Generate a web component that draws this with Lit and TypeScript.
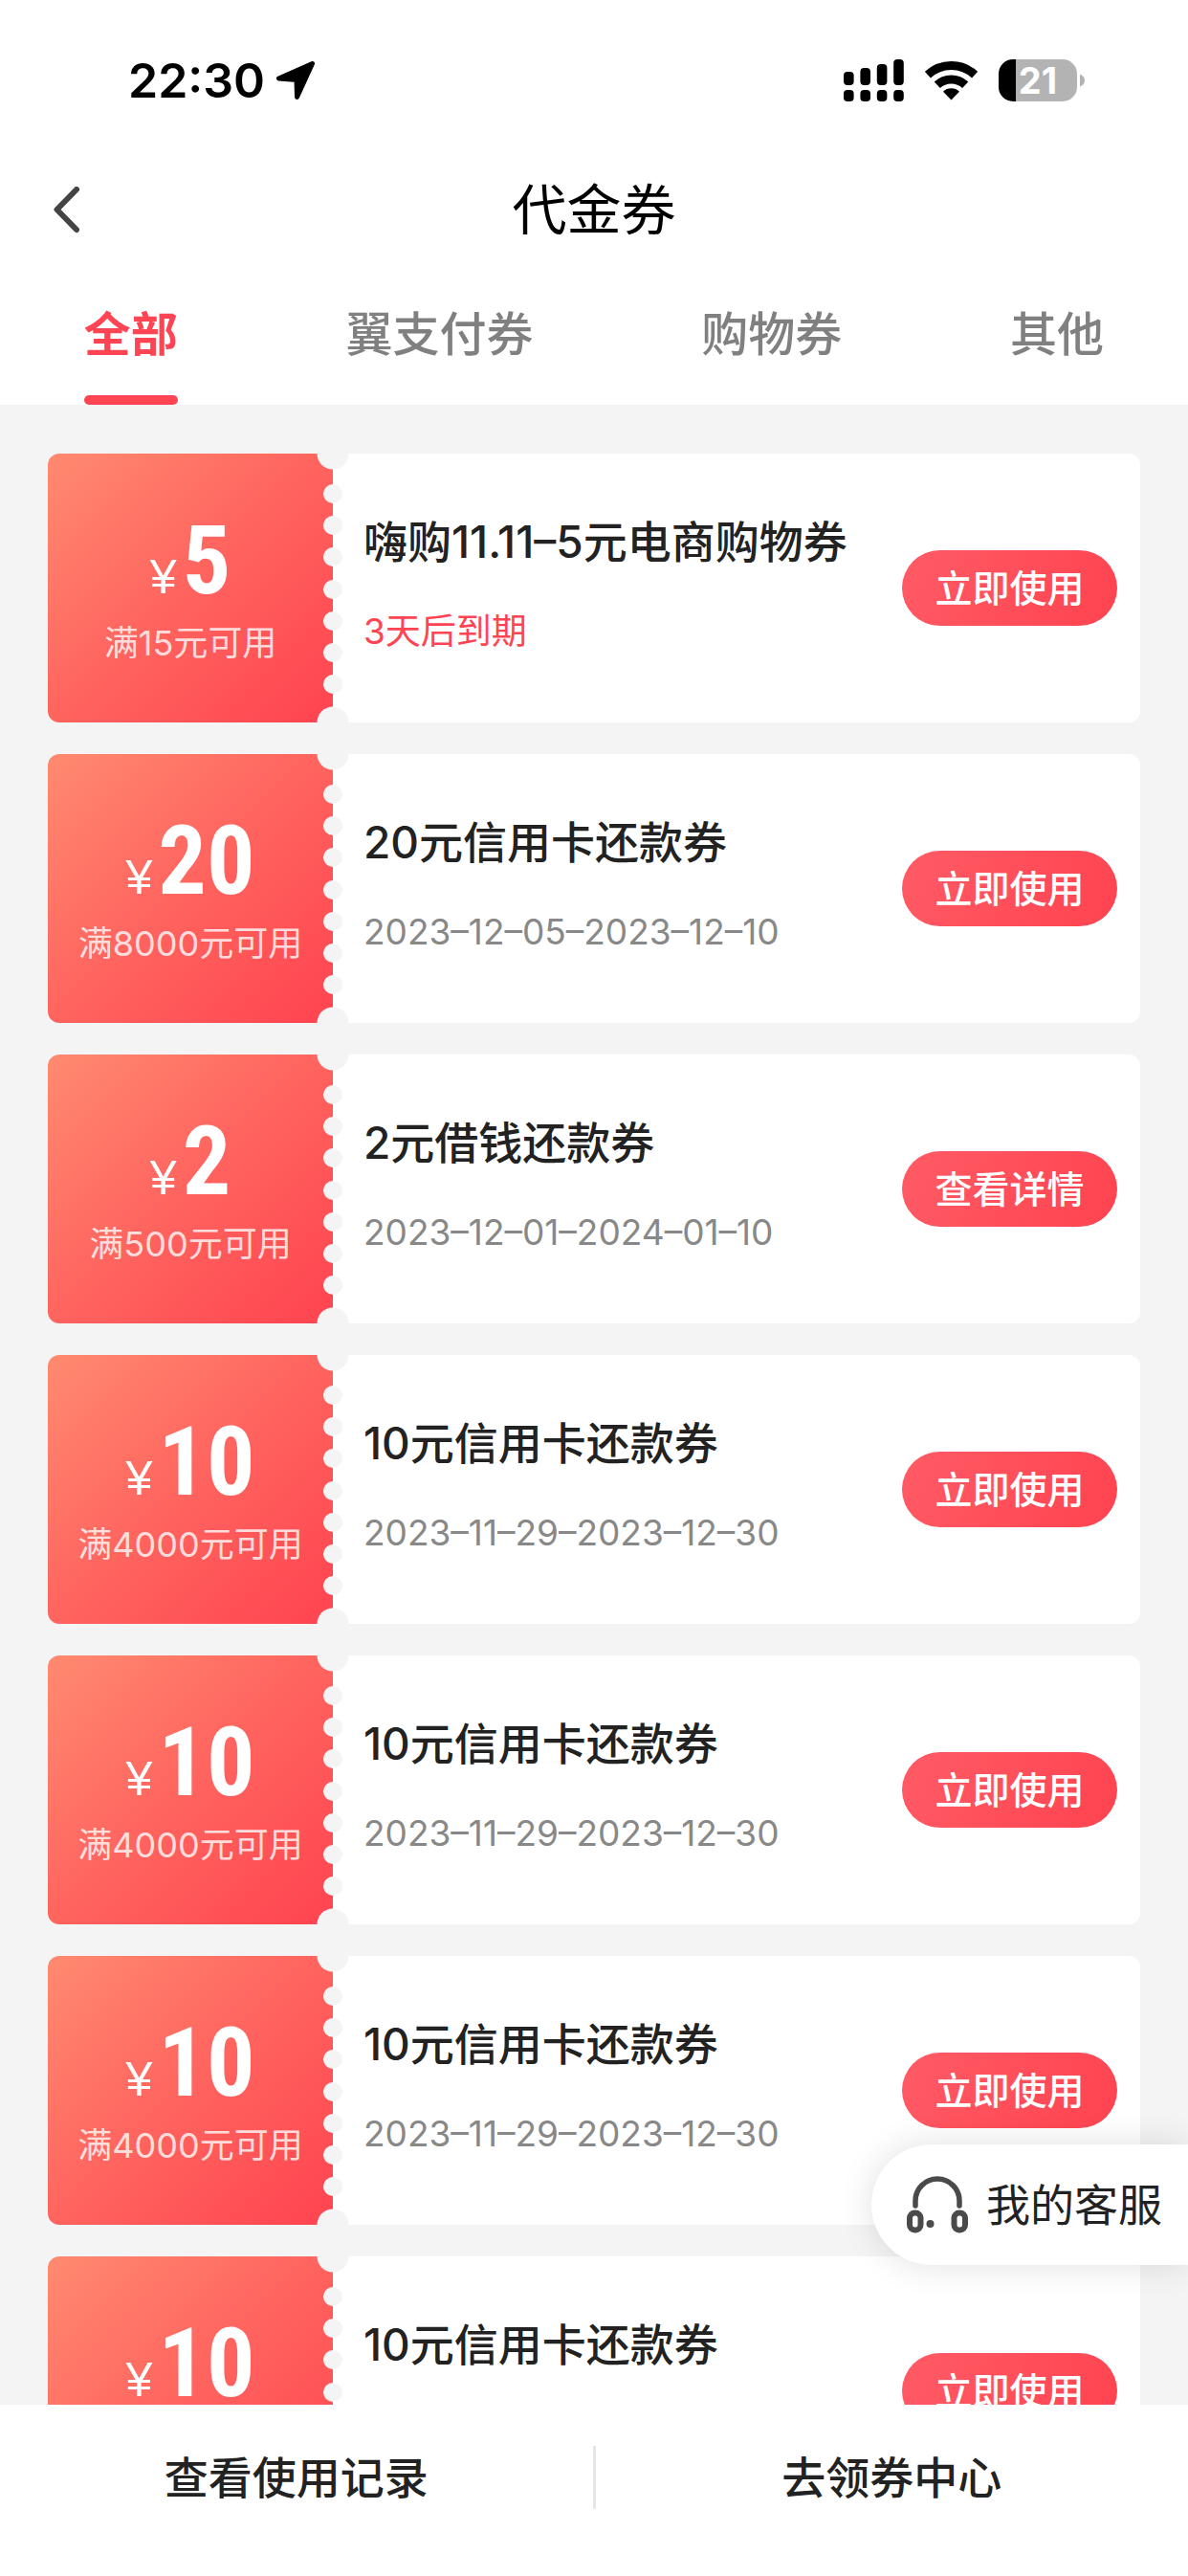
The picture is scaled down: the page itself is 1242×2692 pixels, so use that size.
import { LitElement, html, css, svg } from "lit";
import { customElement, property, state } from "lit/decorators.js";

interface Coupon {
  amount: string;
  condition: string;
  title: string;
  period: string;
  urgent?: boolean;
  action: string;
}

const TABS = ["全部", "翼支付券", "购物券", "其他"];

const repayment: Coupon = {
  amount: "10",
  condition: "满4000元可用",
  title: "10元信用卡还款券",
  period: "2023–11–29–2023–12–30",
  action: "立即使用",
};

const COUPONS: Coupon[] = [
  {
    amount: "5",
    condition: "满15元可用",
    title: "嗨购11.11–5元电商购物券",
    period: "3天后到期",
    urgent: true,
    action: "立即使用",
  },
  {
    amount: "20",
    condition: "满8000元可用",
    title: "20元信用卡还款券",
    period: "2023–12–05–2023–12–10",
    action: "立即使用",
  },
  {
    amount: "2",
    condition: "满500元可用",
    title: "2元借钱还款券",
    period: "2023–12–01–2024–01–10",
    action: "查看详情",
  },
  repayment,
  repayment,
  repayment,
  repayment,
];

const HOLES = [42, 75, 108, 142, 175, 208, 241];

@customElement("status-bar")
export class StatusBar extends LitElement {
  static styles = css`
    :host {
      display: flex;
      align-items: center;
      justify-content: space-between;
      height: 168px;
      padding: 0 108px 0 134px;
      box-sizing: border-box;
      color: #000;
    }
    .side {
      display: flex;
      align-items: center;
    }
    .left {
      gap: 12px;
    }
    .right {
      gap: 22px;
    }
    .time {
      font-size: 50px;
      line-height: 64px;
      font-weight: 600;
    }
    svg {
      display: block;
    }
    .battery {
      display: flex;
      align-items: center;
      gap: 3px;
    }
    .cell {
      display: flex;
      align-items: center;
      justify-content: center;
      width: 82px;
      height: 44px;
      border-radius: 15px;
      background: linear-gradient(90deg, #000 18px, #b3b3b3 18px);
      color: #fff;
      font-size: 38px;
      line-height: 44px;
      font-weight: 700;
    }
  `;

  render() {
    return html`
      <div class="side left">
        <span class="time">22:30</span>
        <svg width="40" height="40" viewBox="0 0 40 40" aria-hidden="true">
          <path
            d="M37.5 2.5 L2.5 18 L21 19.5 L21.5 37.5 Z"
            stroke="#000"
            stroke-width="5"
            stroke-linejoin="round"
          />
        </svg>
      </div>
      <div class="side right">
        <svg width="63" height="44" viewBox="0 0 63 44" aria-hidden="true">
          ${[13, 9, 5, 0].map(
            (top, i) => svg`
              <rect x=${i * 17.4} y=${top} width="10.6" height=${27 - top} rx="4" />
              <rect x=${i * 17.4} y="32" width="10.6" height="12" rx="4" />`
          )}
        </svg>
        <svg width="55" height="44" viewBox="0 0 55 44" aria-hidden="true">
          <g fill="none" stroke="#000" stroke-width="9">
            <path d="M2.9 16.2 A36 36 0 0 1 52.1 16.2" />
            <path d="M12.8 26.8 A21.5 21.5 0 0 1 42.2 26.8" />
          </g>
          <path d="M27.5 42.5 L19 33.7 A12.2 12.2 0 0 1 36 33.7 Z" />
        </svg>
        <div class="battery">
          <span class="cell">21</span>
          <svg width="5" height="14" viewBox="0 0 5 14" aria-hidden="true">
            <path d="M0 0.5 Q5 2.5 5 7 T0 13.5 Z" fill="#b3b3b3" />
          </svg>
        </div>
      </div>
    `;
  }
}

@customElement("coupon-card")
export class CouponCard extends LitElement {
  @property({ attribute: false }) coupon!: Coupon;

  static styles = css`
    :host {
      display: block;
    }
    .card {
      position: relative;
      display: flex;
      height: 281px;
      border-radius: 12px;
      overflow: hidden;
      background: #fff;
    }
    .value {
      flex: none;
      display: flex;
      flex-direction: column;
      align-items: center;
      width: 298px;
      padding-top: 60px;
      box-sizing: border-box;
      background: linear-gradient(135deg, #ff8a70 0%, #ff655f 48%, #ff4350 100%);
      color: #fff;
    }
    .amount {
      display: flex;
      align-items: baseline;
      gap: 6px;
      height: 104px;
      line-height: 104px;
      white-space: nowrap;
    }
    .yen {
      font-family: "Liberation Sans", sans-serif;
      font-size: 50px;
    }
    .number {
      font-family: "Roboto Condensed", "Noto Sans CJK SC", sans-serif;
      font-size: 100px;
      font-weight: 700;
    }
    .condition {
      font-size: 36px;
      line-height: 68px;
      font-weight: 400;
      color: rgba(255, 255, 255, 0.8);
      white-space: nowrap;
    }
    .perforation {
      position: absolute;
      top: 0;
      left: 281px;
      fill: #f4f4f4;
    }
    .info {
      flex: 1;
      min-width: 0;
      padding: 60px 0 0 32px;
    }
    .title {
      margin: 0;
      font-size: 46px;
      line-height: 64px;
      font-weight: 500;
      color: #222;
      white-space: nowrap;
    }
    .period {
      margin: 36px 0 0;
      font-size: 37px;
      line-height: 52px;
      font-weight: 400;
      color: #888;
      white-space: nowrap;
    }
    .urgent {
      color: #ff4453;
    }
    .action {
      flex: none;
      align-self: center;
      width: 225px;
      height: 79px;
      margin-right: 24px;
      padding: 0;
      border: 0;
      border-radius: 40px;
      background: linear-gradient(115deg, #ff5b66, #ff4350);
      color: #fff;
      font: inherit;
      font-size: 39px;
      line-height: 79px;
      font-weight: 500;
    }
  `;

  render() {
    const c = this.coupon;
    return html`
      <article class="card">
        <div class="value">
          <div class="amount">
            <span class="yen">¥</span><span class="number">${c.amount}</span>
          </div>
          <div class="condition">${c.condition}</div>
        </div>
        <svg class="perforation" width="34" height="281" viewBox="0 0 34 281" aria-hidden="true">
          <circle cx="17" cy="0" r="16.5" />
          ${HOLES.map((y) => svg`<circle cx="17" cy=${y} r="10" />`)}
          <circle cx="17" cy="281" r="16.5" />
        </svg>
        <div class="info">
          <h2 class="title">${c.title}</h2>
          <p class="period ${c.urgent ? "urgent" : ""}">${c.period}</p>
        </div>
        <button class="action" type="button">${c.action}</button>
      </article>
    `;
  }
}

@customElement("app-root")
export class AppRoot extends LitElement {
  @state() private active = 0;

  static styles = css`
    :host {
      position: relative;
      display: flex;
      flex-direction: column;
      height: 100vh;
      overflow: hidden;
      background: #f4f4f4;
      font-family: "Inter", "Noto Sans CJK SC", sans-serif;
    }
    .head {
      flex: none;
      background: #fff;
    }
    .titlebar {
      display: grid;
      grid-template-columns: 1fr auto 1fr;
      align-items: center;
      height: 104px;
      padding: 0 55px;
    }
    .back {
      justify-self: start;
      padding: 0;
      border: 0;
      background: none;
    }
    .back svg {
      display: block;
    }
    .heading {
      margin: 0;
      font-size: 57px;
      line-height: 80px;
      font-weight: 400;
      color: #000;
    }
    .tabs {
      display: flex;
      justify-content: space-around;
      padding-top: 15px;
    }
    .tab {
      display: flex;
      flex-direction: column;
      padding: 0;
      border: 0;
      background: none;
      font: inherit;
      font-size: 49px;
      line-height: 126px;
      font-weight: 500;
      color: #808080;
    }
    .tab::after {
      content: "";
      align-self: stretch;
      height: 10px;
      border-radius: 5px;
    }
    .selected {
      color: #ff4453;
      font-weight: 700;
    }
    .selected::after {
      background: #ff4453;
    }
    .list {
      flex: 1;
      min-height: 0;
      overflow: hidden;
      display: flex;
      flex-direction: column;
      gap: 33px;
      padding: 51px 50px 0;
    }
    .coupon {
      flex: none;
    }
    .service {
      position: absolute;
      right: 0;
      bottom: 325px;
      display: flex;
      align-items: center;
      gap: 18px;
      height: 126px;
      padding: 0 27px 0 36px;
      border: 0;
      border-radius: 63px 0 0 63px;
      background: #fff;
      box-shadow: 0 0 36px rgba(0, 0, 0, 0.12);
      color: #222;
      font: inherit;
      font-size: 46px;
      line-height: 64px;
    }
    .footer {
      flex: none;
      display: flex;
      align-items: center;
      height: 152px;
      padding-bottom: 27px;
      background: #fff;
    }
    .link {
      flex: 1;
      text-align: center;
      text-decoration: none;
      font-size: 46px;
      line-height: 64px;
      font-weight: 500;
      color: #222;
    }
    .divider {
      width: 3px;
      height: 66px;
      background: #e6e6e6;
    }
  `;

  render() {
    return html`
      <header class="head">
        <status-bar></status-bar>
        <div class="titlebar">
          <button class="back" type="button" aria-label="返回">
            <svg width="30" height="50" viewBox="0 0 30 50" aria-hidden="true">
              <path
                d="M25 3 L4.5 24 L25 45"
                fill="none"
                stroke="#444"
                stroke-width="6"
                stroke-linecap="round"
                stroke-linejoin="round"
              />
            </svg>
          </button>
          <h1 class="heading">代金券</h1>
        </div>
        <nav class="tabs">
          ${TABS.map(
            (label, i) => html`<button
              type="button"
              class="tab ${i === this.active ? "selected" : ""}"
              @click=${() => (this.active = i)}
            >
              ${label}
            </button>`
          )}
        </nav>
      </header>
      <main class="list">
        ${COUPONS.map((c) => html`<coupon-card class="coupon" .coupon=${c}></coupon-card>`)}
      </main>
      <button class="service" type="button">
        <svg width="66" height="60" viewBox="0 0 66 60" fill="none" stroke="#4a4a4a" stroke-width="5.5" aria-hidden="true">
          <path d="M10 31 V26 A23 23 0 0 1 56 26 V31" stroke-linecap="round" />
          <rect x="4" y="38.5" width="11.5" height="18" rx="5.5" stroke-width="6" />
          <rect x="50.5" y="38.5" width="11.5" height="18" rx="5.5" stroke-width="6" />
          <circle cx="25.5" cy="50" r="4" fill="#4a4a4a" stroke="none" />
        </svg>
        <span>我的客服</span>
      </button>
      <footer class="footer">
        <a class="link" href="#records">查看使用记录</a>
        <span class="divider"></span>
        <a class="link" href="#center">去领券中心</a>
      </footer>
    `;
  }
}
